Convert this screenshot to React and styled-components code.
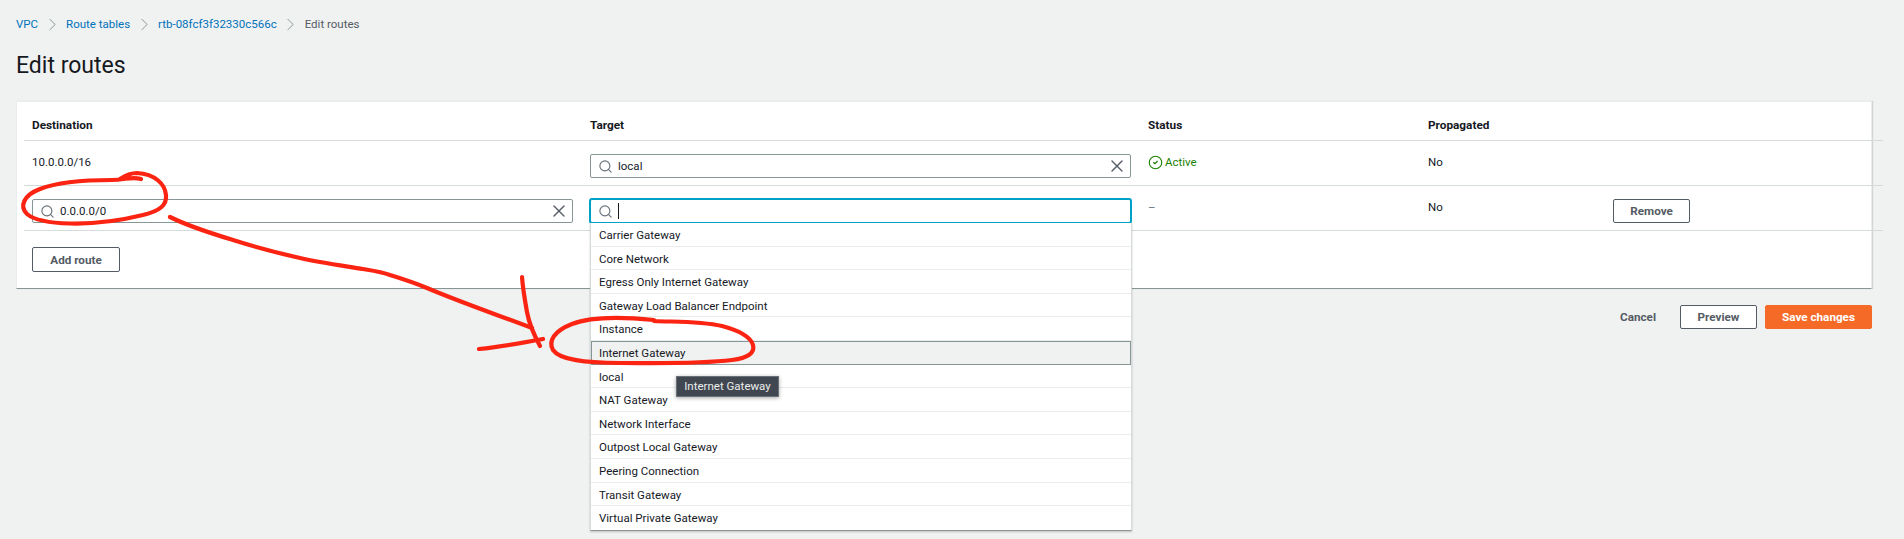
import React from 'react';
import styled, { createGlobalStyle } from 'styled-components';
import { ChevronRight, CircleCheck, Search, X } from 'lucide-react';

const GlobalStyle = createGlobalStyle`
  html, body {
    margin: 0;
    height: 539px;
    overflow: hidden;
    background: #f0f1f1;
  }
  * { box-sizing: border-box; }
`;

const Page = styled.div`
  position: relative;
  width: 1904px;
  height: 539px;
  padding: 16px 32px 0 16px;
  font-family: Roboto, "Liberation Sans", sans-serif;
  font-size: 11.5px;
  color: #16191f;
`;

const Breadcrumbs = styled.nav`
  display: flex;
  align-items: center;
  height: 16px;
  gap: 3.5px;
  color: #687078;
`;

const Crumb = styled.a`
  color: ${(p) => (p.$current ? '#545b64' : '#0073bb')};
`;

const Title = styled.h1`
  margin: 18px 0 0;
  height: 32px;
  font-size: 23px;
  font-weight: 400;
  line-height: 32px;
`;

const Card = styled.section`
  margin-top: 19px;
  height: 188px;
  background: #fff;
  border: 1px solid #eaeded;
  border-bottom-color: #879596;
  box-shadow: 1px 0 1px rgba(0, 0, 0, 0.12);
  padding-left: 7px;
`;

const Row = styled.div`
  display: grid;
  grid-template-columns: 558px 558px 280px 185px 1fr;
  align-items: start;
  width: 1859px;
  height: ${(p) => (p.$head ? '39px' : '45px')};
  padding: ${(p) => (p.$head ? '15px' : '13px')} 0 0 8px;
  border-bottom: 1px solid #d5dbdb;
`;

const HeadCell = styled.div`
  font-size: 11.8px;
  font-weight: 700;
  line-height: 16px;
`;

const Cell = styled.div`
  position: relative;
  line-height: 16px;
  padding-right: ${(p) => (p.$field ? '17px' : '0')};
`;

const Dash = styled.span`
  color: #687078;
`;

const Status = styled.div`
  display: flex;
  align-items: center;
  gap: 2px;
  color: #1d8102;
`;

const Input = styled.div`
  display: flex;
  align-items: center;
  height: 24px;
  padding: 0 3px 0 7px;
  gap: 5px;
  background: #fff;
  border: 1px solid ${(p) => (p.$focus ? '#00a1c9' : '#879596')};
  border-radius: 2px;
  box-shadow: ${(p) => (p.$focus ? '0 0 0 1px #00a1c9' : 'none')};
`;

const Value = styled.span`
  flex: 1;
`;

const Caret = styled.span`
  width: 1px;
  height: 16px;
  background: #16191f;
`;

const Button = styled.button`
  height: ${(p) => p.$h || '24px'};
  width: ${(p) => p.$w};
  padding: 0;
  font: 700 11.7px Roboto, "Liberation Sans", sans-serif;
  color: ${(p) => (p.$primary ? '#fff' : '#545b64')};
  background: ${(p) => (p.$primary ? '#f56a26' : '#fff')};
  border: 1px solid ${(p) => (p.$primary ? '#f56a26' : '#545b64')};
  border-radius: 2px;
`;

const AddRow = styled.div`
  padding: 16px 0 0 8px;
`;

const Menu = styled.ul`
  position: absolute;
  z-index: 2;
  top: 24px;
  left: 0;
  width: 542px;
  margin: 0;
  padding: 0;
  list-style: none;
  background: #fff;
  border: 1px solid #d5dbdb;
  border-top: 0;
  border-bottom: 1px solid #879596;
  box-shadow: 0 1px 2px rgba(0, 0, 0, 0.2);
`;

const MenuItem = styled.li`
  position: relative;
  height: 23.6px;
  line-height: 24px;
  padding-left: 8px;
  border-bottom: 1px solid #eaeded;
  ${(p) => p.$active && `
    background: #f0f1f1;
    outline: 1px solid #879596;
    outline-offset: -1px;
  `}
  &:last-child { border-bottom: 0; }
`;

const Tooltip = styled.div`
  position: absolute;
  z-index: 3;
  top: 11px;
  left: 85px;
  width: 103px;
  height: 21px;
  line-height: 19px;
  text-align: center;
  color: #eaeded;
  background: #414750;
  border: 1px solid #687078;
  box-shadow: 0 1px 4px rgba(0, 0, 0, 0.35);
`;

const Footer = styled.div`
  display: flex;
  justify-content: flex-end;
  align-items: center;
  gap: 8px;
  margin-top: 16px;
`;

const CancelLink = styled.span`
  font-size: 11.7px;
  font-weight: 700;
  color: #545b64;
  margin-right: 16px;
`;

const Marks = styled.svg`
  position: absolute;
  z-index: 5;
  top: 0;
  left: 0;
  pointer-events: none;
`;

const options = [
  'Carrier Gateway',
  'Core Network',
  'Egress Only Internet Gateway',
  'Gateway Load Balancer Endpoint',
  'Instance',
  'Internet Gateway',
  'local',
  'NAT Gateway',
  'Network Interface',
  'Outpost Local Gateway',
  'Peering Connection',
  'Transit Gateway',
  'Virtual Private Gateway',
];

const crumbs = ['VPC', 'Route tables', 'rtb-08fcf3f32330c566c'];

const SearchField = ({ value, focus, clear }) => (
  <Input $focus={focus}>
    <Search size={15} color="#687078" strokeWidth={1.8} />
    {focus && <Caret />}
    <Value>{value}</Value>
    {clear && <X size={20} color="#545b64" strokeWidth={1.6} />}
  </Input>
);

export default function App() {
  return (
    <Page>
      <GlobalStyle />
      <Breadcrumbs>
        {crumbs.map((c) => (
          <React.Fragment key={c}>
            <Crumb>{c}</Crumb>
            <ChevronRight size={21} color="#879596" strokeWidth={1.1} />
          </React.Fragment>
        ))}
        <Crumb $current>Edit routes</Crumb>
      </Breadcrumbs>
      <Title>Edit routes</Title>
      <Card>
        <Row $head>
          <HeadCell>Destination</HeadCell>
          <HeadCell>Target</HeadCell>
          <HeadCell>Status</HeadCell>
          <HeadCell>Propagated</HeadCell>
        </Row>
        <Row>
          <Cell>10.0.0.0/16</Cell>
          <Cell $field><SearchField value="local" clear /></Cell>
          <Cell>
            <Status><CircleCheck size={15} strokeWidth={1.8} />Active</Status>
          </Cell>
          <Cell>No</Cell>
        </Row>
        <Row>
          <Cell $field><SearchField value="0.0.0.0/0" clear /></Cell>
          <Cell $field>
            <SearchField focus />
            <Menu>
              {options.map((o) => (
                <MenuItem key={o} $active={o === 'Internet Gateway'}>
                  {o}
                  {o === 'local' && <Tooltip>Internet Gateway</Tooltip>}
                </MenuItem>
              ))}
            </Menu>
          </Cell>
          <Cell><Dash>–</Dash></Cell>
          <Cell>No</Cell>
          <Cell><Button $w="77px">Remove</Button></Cell>
        </Row>
        <AddRow><Button $w="88px" $h="25px">Add route</Button></AddRow>
      </Card>
      <Footer>
        <CancelLink>Cancel</CancelLink>
        <Button $w="77px">Preview</Button>
        <Button $w="107px" $primary>Save changes</Button>
      </Footer>
      <Marks width="1904" height="539" fill="none" stroke="#fb2412" strokeWidth="4.2" strokeLinecap="round" strokeLinejoin="round">
        <path d="M141 179C132 176 125 180 112 180C92 180 60 181 40 189C24 195 19 206 27 214C40 225 90 228 143 215C160 211 167 205 166 195C165 184 155 174 137 173C130 173 126 175 120 179" />
        <path d="M170 217C190 227 210 233 233 240C255 247 278 253 300 258C322 263 345 266 363 269C375 271 382 272 390 275C403 279 415 283 427 288C460 302 495 314 532 328" />
        <path d="M522 277C523 290 525 301 527 312C529 323 534 335 540 346" />
        <path d="M479 349C500 347 522 343 543 339" />
        <path d="M654 320C625 317 592 316 572 324C554 331 548 341 553 350C560 360 585 363 620 363C660 363 700 364 732 360C748 358 755 353 753 345C751 337 738 330 722 326C700 321 676 322 654 321" />
      </Marks>
    </Page>
  );
}
